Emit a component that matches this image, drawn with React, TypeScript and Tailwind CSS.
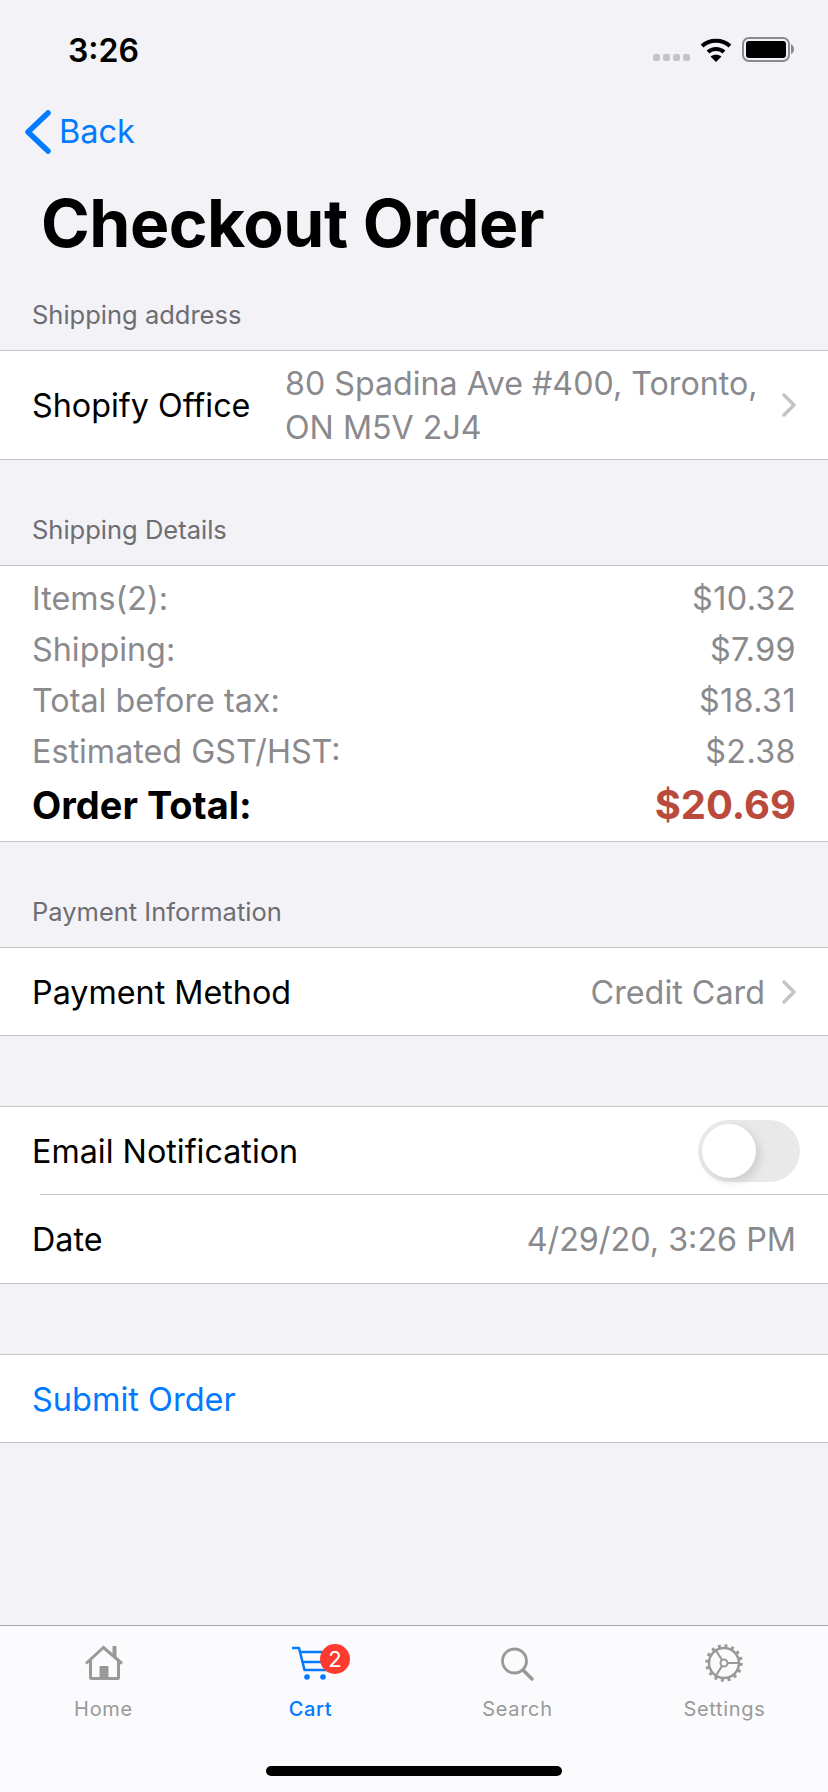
const details = [
  { label: "Items(2):", value: "$10.32" },
  { label: "Shipping:", value: "$7.99" },
  { label: "Total before tax:", value: "$18.31" },
  { label: "Estimated GST/HST:", value: "$2.38" },
];

function SectionHeader({ title }: { title: string }) {
  return (
    <div className="flex h-[105px] items-end px-8 pb-[20px]">
      <span className="text-[25.500px] leading-[30px] text-[#6d6d72]">{title}</span>
    </div>
  );
}

function Chevron() {
  return (
    <svg width="14" height="24" viewBox="0 0 14 24" fill="none" stroke="#c4c4c7" strokeWidth="3.500" strokeLinecap="round" strokeLinejoin="round" className="shrink-0">
      <path d="M2 2L12 12L2 22" />
    </svg>
  );
}

function TabItem({ label, active, children }: { label: string; active?: boolean; children: React.ReactNode }) {
  return (
    <div className="flex w-[207px] flex-col items-center">
      <div className="relative flex h-[40px] w-[44px] items-center justify-center">{children}</div>
      <span className={`mt-[14px] text-[20px] leading-[24px] tracking-[0.7px] ${active ? "font-medium text-[#007aff]" : "font-normal text-[#999999]"}`}>
        {label}
      </span>
    </div>
  );
}

export default function App() {
  return (
    <div className="flex h-[1792px] w-[828px] flex-col overflow-hidden bg-[#f2f2f7] font-['Inter',sans-serif] text-black">
      {/* Status bar */}
      <div className="flex h-[88px] items-end justify-between pb-[18px] pl-[68px] pr-[34px]">
        <span className="text-[32px] leading-[38px] font-semibold">3:26</span>
        <div className="mb-[8px] flex items-end self-start pt-[37px]">
          <div className="mr-[10px] mb-px flex gap-[3px]">
            <span className="h-[7px] w-[7px] rounded-[2px] bg-[#c4c4c8]" />
            <span className="h-[7px] w-[7px] rounded-[2px] bg-[#c4c4c8]" />
            <span className="h-[7px] w-[7px] rounded-[2px] bg-[#c4c4c8]" />
            <span className="h-[7px] w-[7px] rounded-[2px] bg-[#c4c4c8]" />
          </div>
          <svg width="32" height="25" viewBox="0 0 32 25" className="mr-[10px]">
            <path d="M2 9C9.500 2 22.500 2 30 9" fill="none" stroke="#000" strokeWidth="4" />
            <path d="M8 15C12.500 11 19.500 11 24 15" fill="none" stroke="#000" strokeWidth="4" />
            <path d="M16 25L10.500 19.500C13.500 17 18.500 17 21.500 19.500Z" fill="#000" />
          </svg>
          <svg width="52" height="25" viewBox="0 0 52 25">
            <rect x="1" y="1" width="46" height="23" rx="6" fill="none" stroke="#8a8a8e" strokeWidth="2" />
            <rect x="4" y="4" width="40" height="17" rx="3" fill="#000" />
            <path d="M49 7C51 8 52 10 52 12.500C52 15 51 16 49 17Z" fill="#8a8a8e" />
          </svg>
        </div>
      </div>

      {/* Nav bar */}
      <div className="flex h-[88px] items-center pl-[24px]">
        <svg width="28" height="44" viewBox="0 0 28 44" fill="none" stroke="#007aff" strokeWidth="5.500" strokeLinecap="round" strokeLinejoin="round">
          <path d="M24 3L4 22L24 41" />
        </svg>
        <span className="ml-[7px] text-[32.500px] leading-[40px] text-[#007aff]">Back</span>
      </div>

      {/* Title */}
      <div className="flex h-[88px] items-center pt-[6px] pl-[41px]">
        <h1 className="text-[66px] leading-[78px] font-bold tracking-[-0.5px]">Checkout Order</h1>
      </div>

      <div className="flex h-[86px] items-end px-8 pb-[20px]">
        <span className="text-[25.500px] leading-[30px] text-[#6d6d72]">Shipping address</span>
      </div>

      <div className="flex h-[110px] items-center border-y border-[#c6c6c8] bg-white pl-8 pr-[32px]">
        <span className="w-[253px] shrink-0 pt-px text-[32.300px] leading-[40px]">Shopify Office</span>
        <span className="flex-1 pt-px text-[32.200px] leading-[44px] text-[#8a8a8e]">
          80 Spadina Ave #400, Toronto,
          <br />
          ON M5V 2J4
        </span>
        <Chevron />
      </div>

      <SectionHeader title="Shipping Details" />

      <div className="flex h-[277px] flex-col border-y border-[#c6c6c8] bg-white px-8 pt-[7px]">
        {details.map((row) => (
          <div key={row.label} className="flex h-[51px] items-center justify-between text-[32.300px] leading-[40px] text-[#8a8a8e]">
            <span>{row.label}</span>
            <span className="tracking-[0.4px]">{row.value}</span>
          </div>
        ))}
        <div className="mt-[3px] flex h-[50px] items-center justify-between font-bold">
          <span className="text-[38px] leading-[44px]">Order Total:</span>
          <span className="text-[40px] leading-[44px] text-[#b94a3c]">$20.69</span>
        </div>
      </div>

      <SectionHeader title="Payment Information" />

      <div className="flex h-[89px] items-center justify-between border-y border-[#c6c6c8] bg-white pl-8 pr-[32px]">
        <span className="pt-[2px] text-[32.300px] leading-[40px]">Payment Method</span>
        <div className="flex items-center">
          <span className="mr-[17px] pt-[2px] text-[32.300px] leading-[40px] text-[#8a8a8e]">Credit Card</span>
          <Chevron />
        </div>
      </div>

      <div className="mt-[70px] border-y border-[#c6c6c8] bg-white">
        <div className="flex h-[87px] items-center justify-between pl-8 pr-[28px]">
          <span className="pt-[2px] text-[32.300px] leading-[40px]">Email Notification</span>
          <div className="relative h-[62px] w-[102px] rounded-full bg-[#e9e9ea]">
            <div className="absolute top-[4px] left-[4px] h-[54px] w-[54px] rounded-full bg-white shadow-[4px_4px_10px_rgba(0,0,0,0.12)]" />
          </div>
        </div>
        <div className="ml-10 h-px bg-[#c6c6c8]" />
        <div className="flex h-[88px] items-center justify-between px-8">
          <span className="pt-[2px] text-[32.300px] leading-[40px]">Date</span>
          <span className="pt-[2px] text-[32.300px] leading-[40px] text-[#8a8a8e]">4/29/20, 3:26 PM</span>
        </div>
      </div>

      <div className="mt-[70px] flex h-[89px] items-center border-y border-[#c6c6c8] bg-white px-8">
        <span className="pt-[2px] text-[32.500px] leading-[40px] text-[#007aff]">Submit Order</span>
      </div>

      {/* Tab bar */}
      <div className="relative mt-auto h-[167px] border-t border-[#a9a9ad] bg-[#fbfbfd]">
        <div className="flex pt-[17px]">
          <TabItem label="Home">
            <svg width="40" height="36" viewBox="0 0 40 36">
              <path d="M2 18.500L19.500 2.500L38 18.500" fill="none" stroke="#999" strokeWidth="3" />
              <path d="M6.500 14.500V32.500A1 1 0 0 0 7.500 33.500H33.500A1 1 0 0 0 34.500 32.500V14.500" fill="none" stroke="#999" strokeWidth="3" />
              <rect x="15.500" y="21" width="9" height="13" fill="#999" />
              <rect x="28.500" y="1" width="4" height="11" fill="#999" />
            </svg>
          </TabItem>
          <TabItem label="Cart" active>
            <svg width="40" height="36" viewBox="0 0 40 36" fill="none" stroke="#007aff" strokeWidth="2.500">
              <path d="M1 3H8L13.500 25H36" strokeLinejoin="round" />
              <path d="M9.500 7H36" />
              <path d="M11.500 17H36" />
              <circle cx="16" cy="32" r="2.800" fill="#007aff" stroke="none" />
              <circle cx="32" cy="32" r="2.800" fill="#007aff" stroke="none" />
            </svg>
            <span className="absolute top-[1px] left-[31.500px] flex h-[30px] w-[30px] items-center justify-center rounded-full bg-[#ff3b30] text-[22px] leading-none text-white">
              2
            </span>
          </TabItem>
          <TabItem label="Search">
            <svg width="34" height="36" viewBox="0 0 34 36" fill="none" stroke="#999" strokeWidth="2.800" strokeLinecap="round">
              <circle cx="13.500" cy="16" r="12" />
              <path d="M22.500 25.500L31 34" strokeWidth="3.500" />
            </svg>
          </TabItem>
          <TabItem label="Settings">
            <svg width="38" height="38" viewBox="0 0 38 38" fill="none" stroke="#999" className="-ml-[2px]">
              <circle cx="19" cy="19" r="15" strokeWidth="2.500" />
              <circle cx="19" cy="19" r="17" strokeWidth="3.500" strokeDasharray="2.900 3.780" />
              <circle cx="19" cy="19" r="3.500" strokeWidth="2" />
              <path d="M22.500 19H34M17 16L10 5M17 22L10 33" strokeWidth="2.200" />
            </svg>
          </TabItem>
        </div>
        <div className="absolute bottom-[16px] left-[266px] h-[10px] w-[296px] rounded-full bg-black" />
      </div>
    </div>
  );
}
